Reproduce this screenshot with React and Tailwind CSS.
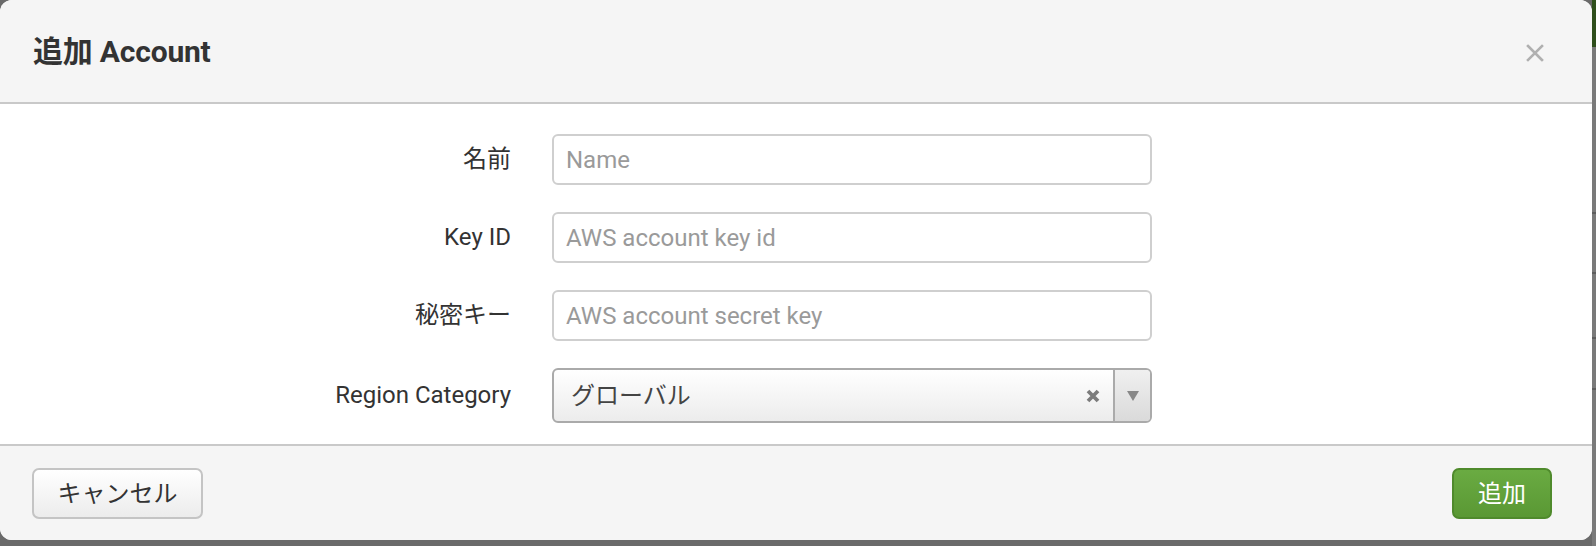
import React from 'react';

const font = { fontFamily: 'Roboto, "Noto Sans CJK JP", sans-serif' };

function TextRow({ label, placeholder }) {
  return (
    <>
      <label className="text-right text-[24px] text-[#333] leading-[51px] h-[51px]">{label}</label>
      <input
        type="text"
        placeholder={placeholder}
        className="h-[51px] w-[600px] rounded-[6px] border-2 border-[#cfcfcf] bg-white px-[12px] text-[24px] text-[#333] placeholder:text-[#9a9a9a] outline-none"
      />
    </>
  );
}

export default function App() {
  return (
    <div className="w-[1596px] h-[546px] bg-[#6a6a6a] flex overflow-hidden" style={font}>
      <div className="w-[1592px] h-[540px] shrink-0 bg-white rounded-[12px] flex flex-col overflow-hidden">
        {/* header */}
        <div className="h-[104px] shrink-0 bg-[#f5f5f5] border-b-2 border-[#c9c9c9] flex items-center justify-between pl-[33px] pr-[48px]">
          <h4 className="text-[30px] font-bold text-[#333] tracking-[-0.2px]">追加 Account</h4>
          <button className="w-[18px] h-[18px] flex items-center justify-center mt-[4px]">
            <svg width="18" height="18" viewBox="0 0 18 18">
              <path d="M2 2 L16 16 M16 2 L2 16" stroke="#b0b0b0" strokeWidth="2.6" strokeLinecap="square" />
            </svg>
          </button>
        </div>

        {/* body */}
        <div className="flex-1 pt-[30px]">
          <div className="grid grid-cols-[511px_600px] gap-x-[41px] gap-y-[27px] items-center">
            <TextRow label="名前" placeholder="Name" />
            <TextRow label="Key ID" placeholder="AWS account key id" />
            <TextRow label="秘密キー" placeholder="AWS account secret key" />
            <label className="text-right text-[24px] text-[#333] leading-[55px]">Region Category</label>
            <div className="h-[55px] w-[600px] rounded-[6px] border-2 border-[#aaaaaa] bg-gradient-to-b from-white to-[#ececec] flex items-stretch overflow-hidden">
              <span className="flex-1 pl-[17px] flex items-center text-[24px] text-[#444]">グローバル</span>
              <span className="w-[40px] flex items-center justify-center">
                <svg width="16" height="16" viewBox="0 0 16 16">
                  <path d="M3 3 L13 13 M13 3 L3 13" stroke="#7c7c7c" strokeWidth="3.8" />
                </svg>
              </span>
              <span className="w-[37px] border-l-2 border-[#aaaaaa] bg-gradient-to-b from-[#f0f0f0] to-[#dadada] flex items-center justify-center">
                <svg width="12" height="10" viewBox="0 0 12 10">
                  <path d="M0 0 H12 L6 10 Z" fill="#888" />
                </svg>
              </span>
            </div>
          </div>
        </div>

        {/* footer */}
        <div className="h-[96px] shrink-0 bg-[#f5f5f5] border-t-2 border-[#c9c9c9] flex items-start justify-between pl-[32px] pr-[40px] pt-[22px]">
          <button className="h-[51px] w-[171px] rounded-[7px] border-2 border-[#c4c4c4] bg-gradient-to-b from-white to-[#ececec] text-[24px] text-[#333]">
            キャンセル
          </button>
          <button className="h-[51px] w-[100px] rounded-[7px] border-2 border-[#4f8a2c] bg-gradient-to-b from-[#6aab42] to-[#5a9834] text-[24px] text-white">
            追加
          </button>
        </div>
      </div>

      {/* page behind the backdrop */}
      <div className="w-[4px] h-[546px] flex flex-col bg-[#7a7a7a]">
        <div className="h-[47px] bg-[#2f4f1c]" />
        <div className="h-[165px]" />
        <div className="h-[2px] bg-[#5e5e5e]" />
        <div className="h-[58px]" />
        <div className="h-[2px] bg-[#5e5e5e]" />
        <div className="h-[63px]" />
        <div className="h-[2px] bg-[#5e5e5e]" />
        <div className="h-[49px]" />
        <div className="h-[2px] bg-[#5e5e5e]" />
      </div>
    </div>
  );
}
